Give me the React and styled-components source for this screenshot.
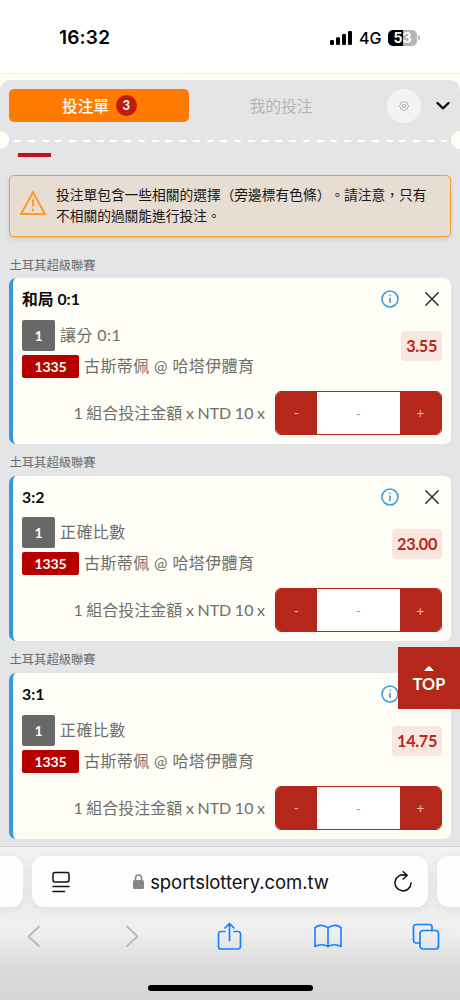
import React from 'react'
import styled, { createGlobalStyle } from 'styled-components'

const GlobalStyle = createGlobalStyle`
    * {
        box-sizing: border-box;
    }
    body {
        margin: 0;
        background: #ffffff;
        font-family: Lato, 'Noto Sans CJK TC', sans-serif;
        text-spacing-trim: space-all;
    }
    button {
        border: 0;
        padding: 0;
        background: none;
        font-family: inherit;
    }
`

const Screen = styled.div`
    position: relative;
    width: 460px;
    height: 1000px;
    overflow: hidden;
    display: flex;
    flex-direction: column;
`

const StatusBar = styled.header`
    height: 73px;
    flex: none;
    display: flex;
    align-items: center;
    justify-content: space-between;
    padding: 2px 41px 0 59px;
    background: #ffffff;
    font-family: Inter, sans-serif;
    color: #000000;
`

const Clock = styled.div`
    font-size: 19px;
    font-weight: 600;
    letter-spacing: 0.2px;
`

const StatusIcons = styled.div`
    display: flex;
    align-items: center;
    margin-right: -1px;
`

const Network = styled.span`
    width: 22px;
    margin: 0 7px 0 7px;
    font-size: 16px;
    font-weight: 500;
    white-space: nowrap;
`

const Battery = styled.div`
    width: 29px;
    height: 16px;
    border-radius: 5px;
    background: linear-gradient(to right, #000000 53%, #b5b5b5 53%);
    color: #ffffff;
    font-size: 14px;
    line-height: 16px;
    font-weight: 700;
    text-align: center;
`

const BatteryTip = styled.div`
    width: 2px;
    height: 5px;
    margin-left: 1px;
    border-radius: 0 2px 2px 0;
    background: #b5b5b5;
`

const Page = styled.main`
    height: 773px;
    flex: none;
    padding-top: 6px;
    background: #fffef6;
    border-top: 1px solid #f1f1f0;
`

const Slip = styled.section`
    height: 766px;
    border-radius: 10px 10px 0 0;
    background: #e4e5e7;
    overflow: hidden;
`

const Tabs = styled.nav`
    height: 51px;
    display: flex;
    align-items: center;
    padding: 0 10px 0 9px;
`

const ActiveTab = styled.button`
    width: 180px;
    height: 33px;
    display: flex;
    align-items: center;
    justify-content: center;
    gap: 7px;
    border-radius: 5px;
    background: #ff7a00;
    color: #fffef6;
    font-size: 15.6px;
    font-weight: 500;
`

const TabLabel = styled.span`
    margin: -2px 0 0 1px;
`

const Count = styled.span`
    width: 21px;
    height: 21px;
    border-radius: 50%;
    background: #c01b12;
    font-size: 13px;
    line-height: 21px;
    font-weight: 700;
`

const Tab = styled.button`
    width: 184px;
    color: #b4b5b6;
    font-size: 15.8px;
    text-align: center;
    margin-top: -1px;
`

const Settings = styled.button`
    width: 34px;
    height: 34px;
    margin: 0 15px 0 14px;
    display: flex;
    align-items: center;
    justify-content: center;
    border-radius: 50%;
    background: #f2f3f5;
`

const TearLine = styled.div`
    height: 18px;
    display: flex;
    align-items: center;
    justify-content: space-between;
`

const Notch = styled.i`
    width: 9px;
    height: 18px;
    background: #fffef6;
    border-radius: ${({ $side }) =>
        $side === 'left' ? '0 9px 9px 0' : '9px 0 0 9px'};
`

const Dashes = styled.div`
    width: 433px;
    height: 2px;
    margin-top: 2px;
    background: repeating-linear-gradient(
        to right,
        #fffef6 0 7px,
        transparent 7px 13.76px
    );
`

const Marker = styled.div`
    width: 33px;
    height: 4px;
    margin: 4px 0 0 18px;
    background: #c01217;
`

const Alert = styled.div`
    height: 62px;
    margin: 18px 9px 0;
    display: flex;
    padding: 8px 0 0 9px;
    border: 1.5px solid #fb9a24;
    border-radius: 5px;
    background: #e8ddd2;
    box-shadow: 0 2px 4px rgba(0, 0, 0, 0.12);
`

const AlertIcon = styled.svg`
    flex: none;
    margin-top: 6px;
    fill: none;
    stroke: #fb9a24;
`

const AlertText = styled.p`
    margin: 1px 0 0 9px;
    color: #171615;
    font-size: 13.72px;
    line-height: 20.5px;
    white-space: nowrap;
`

const League = styled.h2`
    height: ${({ $first }) => ($first ? '41px' : '32px')};
    margin: 0;
    padding: ${({ $first }) => ($first ? '17.5px' : '8px')} 0 0 9.5px;
    color: #6b6c6d;
    font-size: 12.3px;
    line-height: 22px;
    font-weight: 400;
`

const Card = styled.article`
    height: 165.5px;
    margin: 0 9px;
    padding: 9px 9px 0;
    border-left: 4px solid #3498db;
    border-radius: 7px;
    background: #fffef6;
    color: #6e6e6c;
    font-size: 16px;
`

const CardHead = styled.div`
    height: 24px;
    display: flex;
    align-items: center;
    gap: 26.5px;
    padding-right: 3px;
`

const Pick = styled.strong`
    flex: 1;
    color: #0b0b0b;
    font-size: 15.8px;
    line-height: 23px;
    margin-top: -1px;
`

const CardBody = styled.div`
    height: 70px;
    display: flex;
    justify-content: space-between;
    padding-top: 8.5px;
`

const Row = styled.div`
    height: ${({ $tall }) => ($tall ? '31px' : '23px')};
    margin-bottom: 4px;
    display: flex;
    align-items: center;
    white-space: nowrap;
    letter-spacing: 0.4px;
`

const RowText = styled.span`
    margin-top: -3px;
`

const Tag = styled.span`
    width: ${({ $event }) => ($event ? '57px' : '33px')};
    height: 100%;
    margin-right: 5px;
    display: flex;
    align-items: center;
    justify-content: center;
    border-radius: 2px;
    background: ${({ $event }) => ($event ? '#b60000' : '#686868')};
    color: #fffef6;
    font-size: 14px;
    font-weight: 700;
    letter-spacing: -0.15px;
`

const Odds = styled.div`
    height: 30px;
    margin-top: 11.5px;
    padding: 0 5px;
    border-radius: 4px;
    background: #f8e7e0;
    color: #b8281c;
    font-size: 16.3px;
    line-height: 29px;
    font-weight: 700;
    letter-spacing: -0.35px;
`

const Stake = styled.div`
    height: 44px;
    margin-top: 9.5px;
    display: flex;
    align-items: center;
    justify-content: flex-end;
    gap: 9.5px;
    white-space: nowrap;
    word-spacing: -0.5px;
`

const StakeLabel = styled.span`
    margin-top: -2px;
`

const Stepper = styled.div`
    width: 167.5px;
    height: 44px;
    display: flex;
    overflow: hidden;
    border: 1px solid #b5261b;
    border-radius: 6px;
    background: #ffffff;
`

const StepButton = styled.button`
    width: 41.5px;
    background: #b5261b;
    color: #e9b9b1;
    font-size: 14px;
`

const Amount = styled.div`
    flex: 1;
    color: #a3a3a3;
    font-size: 14px;
    line-height: 43px;
    text-align: center;
`

const TopButton = styled.button`
    position: absolute;
    right: 0;
    top: 647px;
    width: 62px;
    height: 62px;
    display: flex;
    flex-direction: column;
    align-items: center;
    padding-top: 19px;
    background: #b5261b;
    color: #fffef6;
    font-size: 16.2px;
    line-height: 25px;
    font-weight: 700;
`

const Browser = styled.footer`
    flex: 1;
    padding-top: 9px;
    border-top: 1px solid #d2d3d4;
    background: linear-gradient(
        #f2f2f3 0,
        #ebebec 30%,
        #efefef 55%,
        #dadada 80%,
        #d5d5d5 100%
    );
`

const AddressRow = styled.div`
    display: flex;
    justify-content: space-between;
    gap: 9px;
    margin: 0 -20px;
`

const AddressPeek = styled.div`
    width: 43px;
    height: 51px;
    border-radius: 12px;
    background: #fdfdfd;
    box-shadow: 0 2px 8px rgba(0, 0, 0, 0.06);
`

const AddressBar = styled(AddressPeek)`
    width: 396px;
    display: flex;
    align-items: center;
    padding: 0 16px 0 19px;
    color: #111111;
`

const Host = styled.div`
    flex: 1;
    display: flex;
    align-items: center;
    justify-content: center;
    gap: 6px;
    padding-right: 3px;
    font-family: Inter, sans-serif;
    font-size: 18.5px;
    letter-spacing: -0.05px;
`

const Toolbar = styled.div`
    height: 50px;
    display: grid;
    grid-template-columns: repeat(5, 98.2px);
    place-items: center;
    margin: 4px 0 0 -15.5px;
`

const HomeIndicator = styled.div`
    width: 165px;
    height: 6px;
    margin: 24px auto 0;
    border-radius: 3px;
    background: #000000;
`

const Stroke = styled.svg`
    display: block;
    flex: none;
    fill: none;
    stroke: ${({ $color }) => $color};
    stroke-width: ${({ $weight }) => $weight || 1.5};
    stroke-linecap: round;
    stroke-linejoin: round;
`

const SignalIcon = () => (
    <svg width="22" height="14" viewBox="0 0 22 14">
        <rect x="0" y="9" width="4" height="5" rx="1.2" />
        <rect x="6" y="6.3" width="4" height="7.7" rx="1.2" />
        <rect x="12" y="3" width="4" height="11" rx="1.2" />
        <rect x="18" y="0" width="4" height="14" rx="1.2" />
    </svg>
)

const gearPath = Array.from({ length: 64 }, (_, i) => {
    const angle = (i * Math.PI) / 32
    const radius = 4.2 + 0.5 * Math.cos(angle * 8)
    const x = (5 + radius * Math.cos(angle)).toFixed(2)
    const y = (5 + radius * Math.sin(angle)).toFixed(2)
    return `${i ? 'L' : 'M'}${x} ${y}`
}).join('')

const GearIcon = () => (
    <Stroke width="10" height="10" viewBox="0 0 10 10" $color="#9fa0a1" $weight={0.8}>
        <path d={`${gearPath}Z`} />
        <circle cx="5" cy="5" r="1.6" />
    </Stroke>
)

const WarningIcon = () => (
    <AlertIcon width="28" height="26" viewBox="0 0 28 26">
        <path d="M14 2.2 26 24H2Z" strokeWidth="2" />
        <path d="M14 9.3v7.2M14 18.8v2.5" strokeWidth="2.2" />
    </AlertIcon>
)

const InfoIcon = () => (
    <Stroke width="18" height="18" viewBox="0 0 18 18" $color="#3e9cdd" $weight={1.6}>
        <circle cx="9" cy="9" r="8" />
        <path d="M9 8.3v4.2M9 5.3v.1" />
    </Stroke>
)

const CloseIcon = () => (
    <Stroke width="14" height="14" viewBox="0 0 14 14" $color="#252525" $weight={1.4}>
        <path d="M.8.8l12.4 12.4M13.2.8.8 13.2" />
    </Stroke>
)

const bets = [
    { pick: '和局 0:1', market: '讓分 0:1', odds: '3.55' },
    { pick: '3:2', market: '正確比數', odds: '23.00' },
    { pick: '3:1', market: '正確比數', odds: '14.75' },
]

const BetCard = ({ bet }) => (
    <Card>
        <CardHead>
            <Pick>{bet.pick}</Pick>
            <InfoIcon />
            <CloseIcon />
        </CardHead>
        <CardBody>
            <div>
                <Row $tall>
                    <Tag>1</Tag>
                    <RowText>{bet.market}</RowText>
                </Row>
                <Row>
                    <Tag $event>1335</Tag>
                    <RowText>古斯蒂佩 @ 哈塔伊體育</RowText>
                </Row>
            </div>
            <Odds>{bet.odds}</Odds>
        </CardBody>
        <Stake>
            <StakeLabel>1 組合投注金額 x NTD 10 x</StakeLabel>
            <Stepper>
                <StepButton>-</StepButton>
                <Amount>-</Amount>
                <StepButton>+</StepButton>
            </Stepper>
        </Stake>
    </Card>
)

const App = () => (
    <Screen lang="zh-Hant-TW">
        <GlobalStyle />
        <StatusBar>
            <Clock>16:32</Clock>
            <StatusIcons>
                <SignalIcon />
                <Network>4G</Network>
                <Battery>53</Battery>
                <BatteryTip />
            </StatusIcons>
        </StatusBar>
        <Page>
            <Slip>
                <Tabs>
                    <ActiveTab>
                        <TabLabel>投注單</TabLabel>
                        <Count>3</Count>
                    </ActiveTab>
                    <Tab>我的投注</Tab>
                    <Settings>
                        <GearIcon />
                    </Settings>
                    <Stroke width="14" height="9" viewBox="0 0 14 9" $color="#111111" $weight={2.3}>
                        <path d="M1.5 2 7 7.3 12.5 2" />
                    </Stroke>
                </Tabs>
                <TearLine>
                    <Notch $side="left" />
                    <Dashes />
                    <Notch $side="right" />
                </TearLine>
                <Marker />
                <Alert>
                    <WarningIcon />
                    <AlertText>
                        投注單包含一些相關的選擇（旁邊標有色條）。請注意，只有
                        <br />
                        不相關的過關能進行投注。
                    </AlertText>
                </Alert>
                {bets.map((bet, index) => (
                    <React.Fragment key={bet.pick}>
                        <League $first={index === 0}>土耳其超級聯賽</League>
                        <BetCard bet={bet} />
                    </React.Fragment>
                ))}
            </Slip>
        </Page>
        <TopButton>
            <svg width="10" height="5" viewBox="0 0 10 5" fill="#fffef6">
                <path d="M0 5 4 .6Q5-.2 6 .6L10 5Z" />
            </svg>
            TOP
        </TopButton>
        <Browser>
            <AddressRow>
                <AddressPeek />
                <AddressBar>
                    <Stroke width="20" height="22" viewBox="0 0 20 22" $color="#111111">
                        <rect x="2" y="1.5" width="16" height="9.5" rx="2" />
                        <path d="M2 15.5h16M2 20.5h11.5" />
                    </Stroke>
                    <Host>
                        <svg width="11" height="15" viewBox="0 0 11 15">
                            <path d="M2.5 7V4a3 3 0 0 1 6 0v3" fill="none" stroke="#85858a" strokeWidth="1.5" />
                            <rect y="6" width="11" height="9" rx="1.5" fill="#85858a" />
                        </svg>
                        sportslottery.com.tw
                    </Host>
                    <Stroke width="18" height="22" viewBox="0 0 18 22" $color="#111111">
                        <path d="M11.5 4.3A8 8 0 1 0 17 12M8.500 4h4.300M9.200 .8l4 3.500-4 3.700" />
                    </Stroke>
                </AddressBar>
                <AddressPeek />
            </AddressRow>
            <Toolbar>
                <Stroke width="15" height="22" viewBox="0 0 15 22" $color="#b9b9ba" $weight={1.8}>
                    <path d="M13 1.5 2.5 11.5 13 21" />
                </Stroke>
                <Stroke width="15" height="22" viewBox="-2 0 15 22" $color="#b9b9ba" $weight={1.8}>
                    <path d="M1 1.5 11.5 11.5 1 21" />
                </Stroke>
                <Stroke width="25" height="28" viewBox="0 0 25 28" $color="#1580fb" $weight={1.7}>
                    <path d="M8 9.5H4a2.5 2.5 0 0 0-2.5 2.5v12.5A2.5 2.5 0 0 0 4 27h17a2.5 2.5 0 0 0 2.5-2.5V12A2.5 2.5 0 0 0 21 9.5h-4M12.5 18.5V1.5M8 6l4.5-4.5L17 6" />
                </Stroke>
                <Stroke width="28" height="24" viewBox="0 0 28 24" $color="#1580fb" $weight={1.6}>
                    <path d="M14 4Q7.5-1 1 3.5V22.5Q7.5 19 14 22.5Q20.5 19 27 22.5V3.5Q20.5-1 14 4V22.5" />
                </Stroke>
                <Stroke width="28" height="27" viewBox="0 0 28 27" $color="#1580fb" $weight={1.7}>
                    <rect x="8" y="7.5" width="18.5" height="18.5" rx="3" />
                    <path d="M8 20H4a2.5 2.5 0 0 1-2.5-2.5V4A2.5 2.5 0 0 1 4 1.5h13.5A2.5 2.5 0 0 1 20 4v3.5" />
                </Stroke>
            </Toolbar>
            <HomeIndicator />
        </Browser>
    </Screen>
)

export default App
